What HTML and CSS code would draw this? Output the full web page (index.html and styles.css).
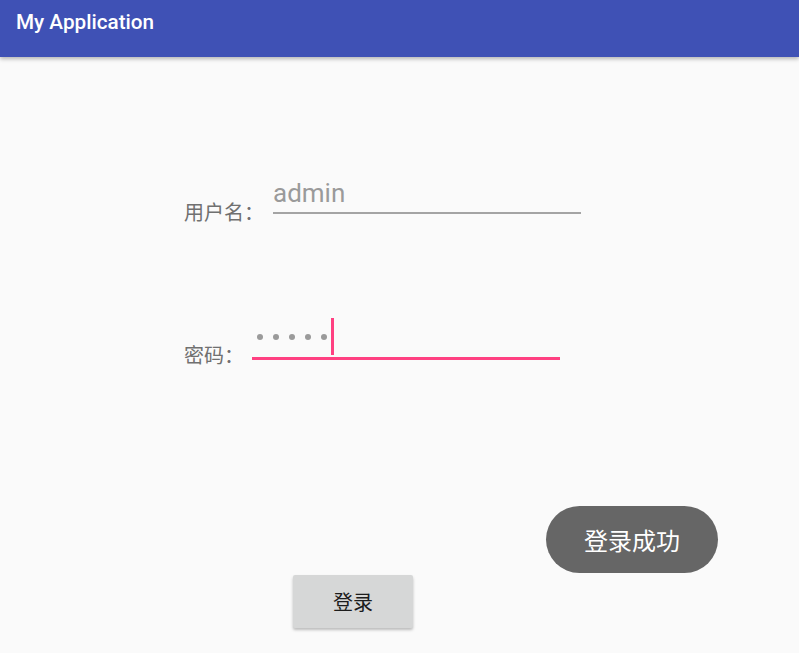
FILE: index.html
```html
<!DOCTYPE html>
<html lang="zh-CN">
<head>
<meta charset="utf-8">
<title>My Application</title>
<link rel="stylesheet" href="styles.css">
</head>
<body>
<header class="appbar">
  <h1 class="title">My Application</h1>
</header>
<main class="content">
  <div class="row row-user">
    <label class="label">用户名：</label>
    <div class="field field-user">admin</div>
  </div>
  <div class="row row-pass">
    <label class="label">密码：</label>
    <div class="field field-pass">
      <span class="dot"></span><span class="dot"></span><span class="dot"></span><span class="dot"></span><span class="dot"></span><span class="cursor"></span>
    </div>
  </div>
  <button class="btn">登录</button>
</main>
<div class="toast">登录成功</div>
</body>
</html>
```
FILE: styles.css
```css
html, body {
  margin: 0;
  padding: 0;
}
body {
  width: 799px;
  height: 653px;
  overflow: hidden;
  background: #fafafa;
  font-family: "Noto Sans CJK SC", Roboto, sans-serif;
  position: relative;
}
.appbar {
  height: 57px;
  background: #3f51b5;
  box-shadow: 0 2px 4px rgba(0, 0, 0, 0.28);
  box-sizing: border-box;
  padding: 10px 0 0 16px;
  position: relative;
  z-index: 1;
}
.title {
  margin: 0;
  font-family: Roboto, "Noto Sans", sans-serif;
  font-weight: 500;
  font-size: 20.7px;
  line-height: 24px;
  color: #ffffff;
}
.content {
  padding: 121px 0 0 184px;
  display: flex;
  flex-direction: column;
  align-items: flex-start;
}
.row {
  display: flex;
  align-items: flex-start;
}
.label {
  font-size: 20px;
  line-height: 20px;
  color: #707070;
  margin-right: 8px;
}
.row-user .label {
  margin-top: 24px;
  margin-right: 9px;
}
.row-pass {
  margin-top: 96px;
}
.row-pass .label {
  margin-top: 27px;
}
.field {
  width: 308px;
  box-sizing: border-box;
}
.field-user {
  font-family: Roboto, sans-serif;
  font-size: 26px;
  line-height: 30px;
  color: #9a9a9a;
  padding-bottom: 4px;
  border-bottom: 2px solid #a4a4a4;
}
.field-pass {
  height: 42px;
  padding: 0 0 2px 5px;
  border-bottom: 3px solid #ff4081;
  display: flex;
  align-items: center;
  gap: 10px;
}
.dot {
  width: 6px;
  height: 6px;
  border-radius: 50%;
  background: #9a9a9a;
}
.cursor {
  width: 3px;
  height: 37px;
  background: #ff4081;
  margin-left: -6px;
}
.btn {
  margin: 210px 0 0 109px;
  width: 120px;
  height: 53px;
  border: none;
  border-radius: 2px;
  background: #d6d7d7;
  box-shadow: 0 2px 3px rgba(0, 0, 0, 0.25);
  font-family: "Noto Sans CJK SC", sans-serif;
  font-size: 20px;
  color: #1c1c1c;
  padding: 0;
}
.toast {
  position: absolute;
  left: 546px;
  top: 506px;
  width: 172px;
  height: 67px;
  border-radius: 34px;
  background: #666666;
  color: #ffffff;
  font-size: 24px;
  display: flex;
  align-items: center;
  justify-content: center;
}
```
